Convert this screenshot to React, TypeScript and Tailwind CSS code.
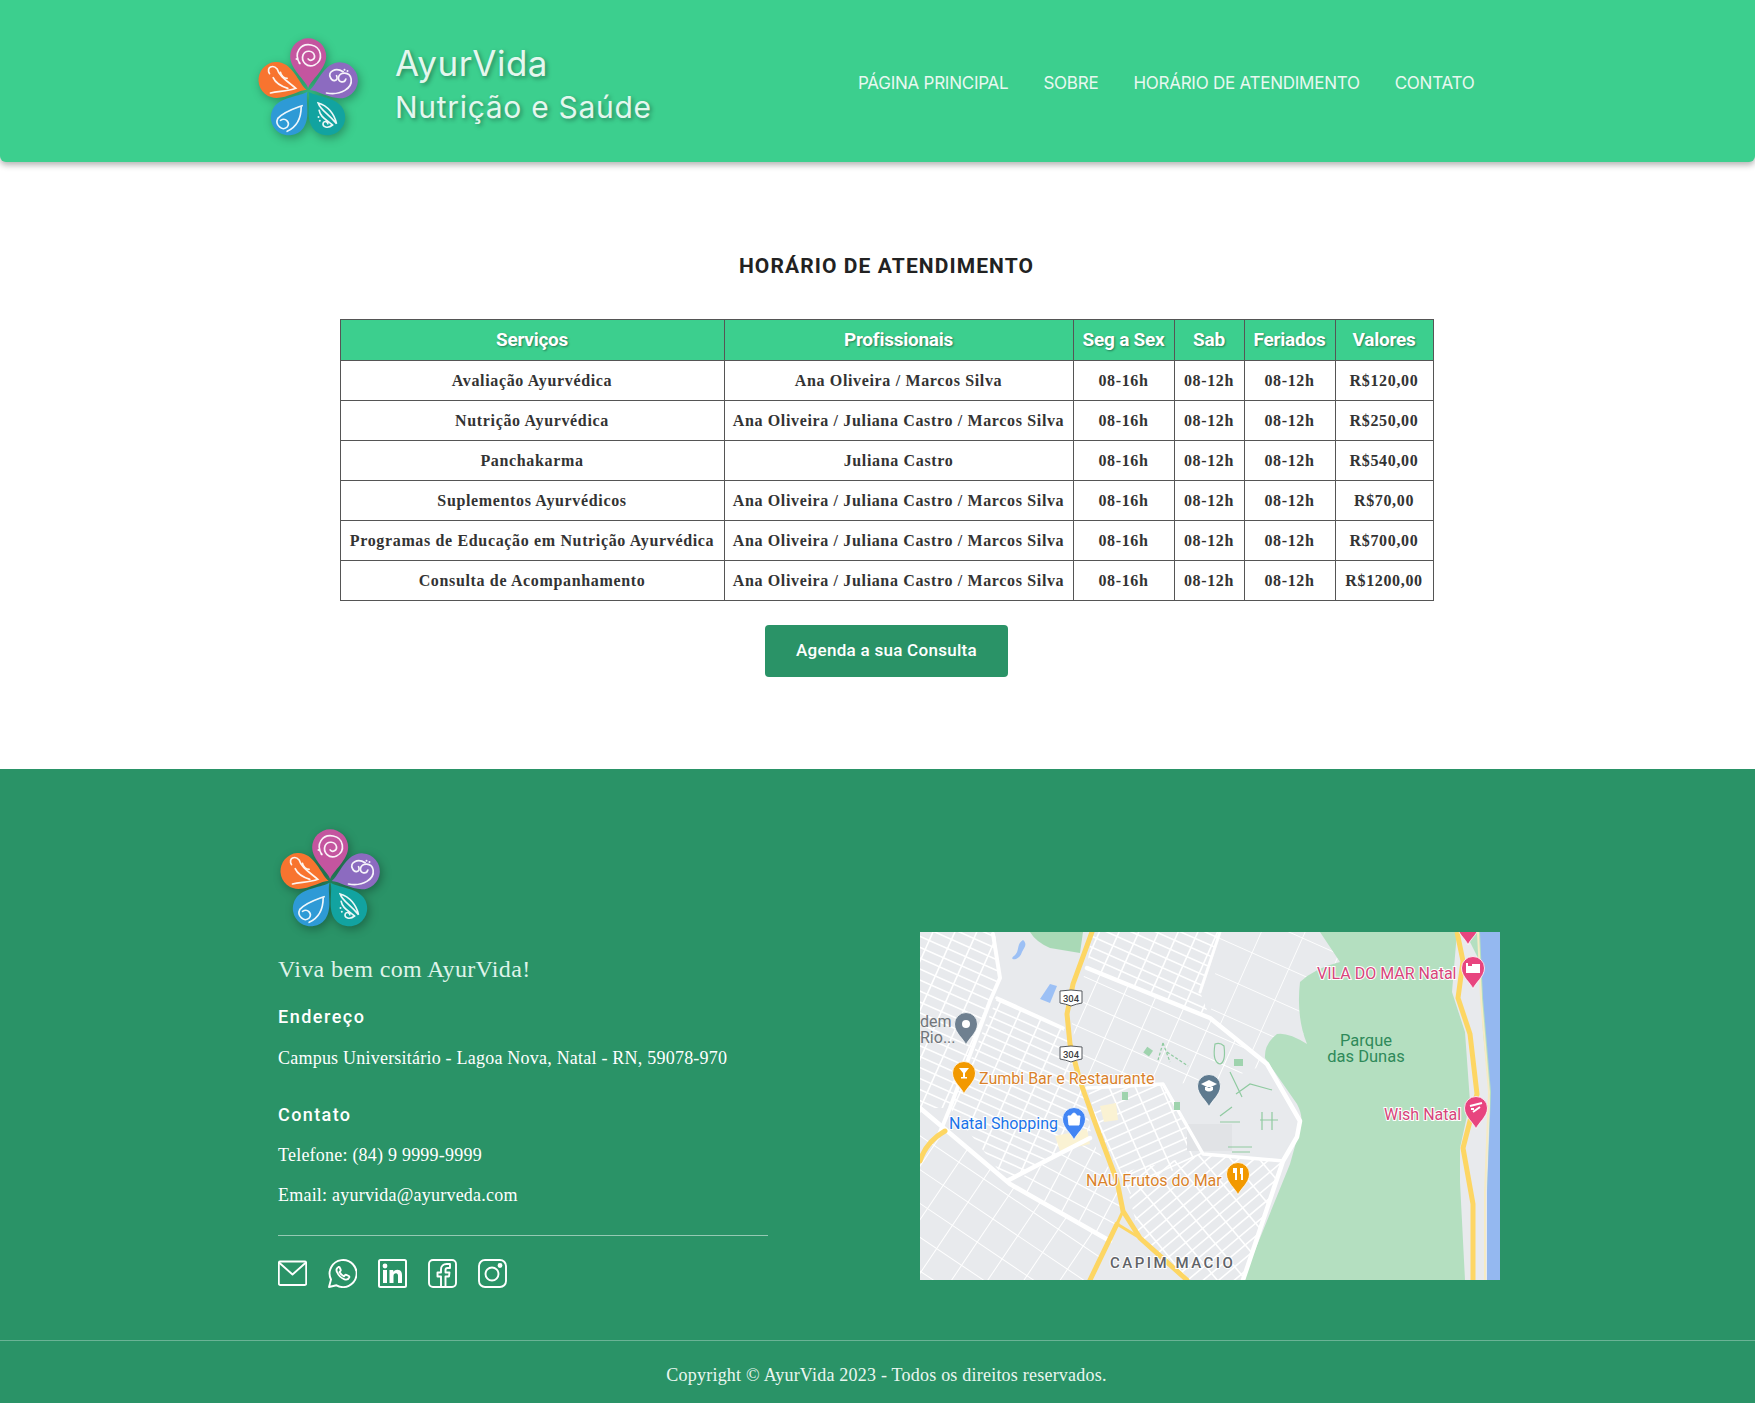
import type { ReactNode } from 'react'

const services = [
  ['Avaliação Ayurvédica', 'Ana Oliveira / Marcos Silva', 'R$120,00'],
  ['Nutrição Ayurvédica', 'Ana Oliveira / Juliana Castro / Marcos Silva', 'R$250,00'],
  ['Panchakarma', 'Juliana Castro', 'R$540,00'],
  ['Suplementos Ayurvédicos', 'Ana Oliveira / Juliana Castro / Marcos Silva', 'R$70,00'],
  ['Programas de Educação em Nutrição Ayurvédica', 'Ana Oliveira / Juliana Castro / Marcos Silva', 'R$700,00'],
  ['Consulta de Acompanhamento', 'Ana Oliveira / Juliana Castro / Marcos Silva', 'R$1200,00'],
]

const navLinks = ['PÁGINA PRINCIPAL', 'SOBRE', 'HORÁRIO DE ATENDIMENTO', 'CONTATO']

const DROP = 'M0 95 C-8 72 -54 38 -54 0 A54 54 0 1 1 54 0 C54 38 8 72 0 95Z'

function Logo() {
  return (
    <svg viewBox="60 52 308 300" className="block h-[100px] w-[103px] shrink-0 [filter:drop-shadow(2px_3px_5px_rgba(0,0,0,0.3))]">
      <path d={DROP} fill="#c4559f" transform="translate(213 110)" />
      <path d={DROP} fill="#8c6bc0" transform="translate(308 182) rotate(72)" />
      <path d={DROP} fill="#12a3a0" transform="translate(270 293) rotate(144)" />
      <path d={DROP} fill="#2e9ad6" transform="translate(155 293) rotate(216)" />
      <path d={DROP} fill="#f8742f" transform="translate(118 181) rotate(288)" />
      <g fill="none" stroke="#fff" strokeWidth="5" strokeLinecap="round" opacity="0.92">
        <path d="M188 132C168 100 190 70 222 76C254 82 260 122 232 136C210 146 190 125 198 105C205 90 228 92 232 108C234 120 220 126 213 118" />
        <path d="M268 220C312 228 346 205 342 178C338 154 306 156 304 174C303 188 322 192 326 178" />
        <path d="M318 156C295 142 270 156 280 174C286 188 306 184 298 168" />
        <path d="M97 162C86 142 108 134 120 148C126 170 150 184 176 206C150 216 124 214 100 220" />
        <path d="M108 174C116 192 132 200 152 206" />
        <path d="M130 158C132 170 142 176 150 176" />
        <path d="M195 258C168 268 142 275 122 296C112 316 136 336 150 322C160 310 146 292 130 302" />
        <path d="M192 262C192 290 182 320 150 335" />
        <path d="M243 250C250 272 272 280 298 312C292 284 272 258 243 250Z" />
        <path d="M246 272C250 292 265 298 286 316C272 328 255 322 258 310C262 302 272 306 272 312" />
      </g>
      <g fill="#fff" opacity="0.9">
        <circle cx="178" cy="118" r="3" />
        <circle cx="187" cy="130" r="3" />
        <circle cx="322" cy="150" r="3" />
        <circle cx="331" cy="154" r="3" />
        <circle cx="244" cy="292" r="3" />
        <circle cx="248" cy="303" r="3" />
      </g>
    </svg>
  )
}

function Pin({ x, y, color, children }: { x: number; y: number; color: string; children?: ReactNode }) {
  return (
    <g transform={`translate(${x} ${y})`}>
      <path d="M0 21C-2 15 -11.5 9 -11.5 0A11.5 11.5 0 1 1 11.5 0C11.5 9 2 15 0 21Z" fill={color} stroke="#fff" strokeWidth="0.8" />
      {children}
    </g>
  )
}

function Shield({ x, y }: { x: number; y: number }) {
  return (
    <g transform={`translate(${x} ${y})`}>
      <path d="M-11 -7Q0 -9 11 -7L11 5Q5 6 0 8Q-5 6 -11 5Z" fill="#fff" stroke="#55595e" strokeWidth="1" />
      <text y="3.5" textAnchor="middle" fontSize="9.5" fontFamily="Roboto, sans-serif" fontWeight="500" fill="#3c4043">
        304
      </text>
    </g>
  )
}

// a street grid covering one district of the map, cut to the district's outline
function District({ id, outline, angle, step, cross, width = 1.6 }: { id: string; outline: string; angle: number; step: number; cross: number; width?: number }) {
  const lines = []
  for (let i = -700; i <= 700; i += step) lines.push(<path key={`r${i}`} d={`M-700 ${i}H700`} />)
  for (let i = -700; i <= 700; i += cross) lines.push(<path key={`c${i}`} d={`M${i} -700V700`} />)
  return (
    <g>
      <clipPath id={id}>
        <path d={outline} />
      </clipPath>
      <g clipPath={`url(#${id})`}>
        <g transform={`translate(200 170) rotate(${angle})`} stroke="#fff" strokeWidth={width} fill="none">
          {lines}
        </g>
      </g>
    </g>
  )
}

function CityMap() {
  const label = 'font-[Roboto,sans-serif] text-[16px] [paint-order:stroke] [stroke:#ffffff] [stroke-width:2px]'
  const parkLabel = 'font-[Roboto,sans-serif] text-[16.5px] [paint-order:stroke] [stroke:#b4dfc0] [stroke-width:2px]'
  return (
    <svg viewBox="0 0 580 348" className="block h-[348px] w-[580px] shrink-0">
      <defs>
        <clipPath id="map-box">
          <rect width="580" height="348" />
        </clipPath>
      </defs>
      <g clipPath="url(#map-box)">
        <rect width="580" height="348" fill="#e8eaed" />
        <District id="d1" outline="M0 0H75L80 46L30 176H0Z" angle={24} step={10} cross={20} />
        <District id="d2" outline="M77 66L143 96L150 112L162 152L172 206L87 249L30 176Z" angle={24} step={9} cross={22} />
        <District id="d3" outline="M172 0H300L280 60L290 86L167 36Z" angle={24} step={10} cross={18} />
        <District id="d4" outline="M167 36L290 86L347 132L300 150L243 152L162 152L150 80Z" angle={24} step={24} cross={30} width={1} />
        <District id="d5" outline="M167 156L243 152L283 222L210 262L180 200Z" angle={-24} step={10} cross={24} />
        <District id="d6" outline="M90 252L170 206L197 249L203 285L190 309Z" angle={28} step={18} cross={20} width={1.2} />
        <District id="d7" outline="M0 176L90 252L190 309L170 348H0Z" angle={34} step={28} cross={30} width={1} />
        <District id="d8" outline="M203 240L283 222L363 229L323 348H267L220 306Z" angle={-40} step={10} cross={22} />
        <District id="d9" outline="M300 0H400L420 29L380 49L387 100L340 125L290 86Z" angle={24} step={34} cross={40} width={0.8} />
        <path d="M267 192H312V219H267Z" fill="#e1e3e6" />
        <path d="M110 0H163L160 21L130 16Q116 10 110 0Z" fill="#a9d9b6" />
        <path d="M400 0L420 30Q395 36 380 50Q376 85 387 112Q368 100 357 102Q344 112 345 126L377 172Q384 185 380 196L370 232L323 348H580V0Z" fill="#b4dfc0" />
        <path d="M120 67L130 52L137 54L130 71Z" fill="#9cc0f5" />
        <path d="M103 8C96 12 100 20 94 24C88 28 99 30 102 20C104 16 108 12 103 8Z" fill="#9cc0f5" />
        <path d="M180 174L196 171L198 188L184 190Z" fill="#faf2d3" />
        <path d="M135 204L167 197L170 212L140 219Z" fill="#faf2d3" />
        <g fill="none" stroke="#fff" strokeLinecap="round" strokeLinejoin="round">
          <path strokeWidth="4" d="M73 2L80 46L70 69L30 176L18 205" />
          <path strokeWidth="4.5" d="M0 176L90 252L190 309" />
          <path strokeWidth="3.5" d="M77 66L143 96" />
          <path strokeWidth="4.5" d="M167 36L290 86L347 132L380 189L377 205L363 229L323 348" />
          <path strokeWidth="4.5" d="M87 249L170 206" />
          <path strokeWidth="3.5" d="M167 156L243 152L283 222L363 229" />
          <path strokeWidth="3" d="M300 0L280 60" />
        </g>
        <g fill="none" stroke="#fdd663" strokeLinecap="round" strokeLinejoin="round" strokeWidth="5">
          <path d="M172 0L153 52L147 82L150 112L160 149L177 196L197 249L203 279L220 306L267 348" />
          <path d="M197 292L170 348" />
          <path d="M203 279L197 292L220 306" strokeWidth="3" />
          <path d="M0 229Q6 210 25 199" />
        </g>
        <path d="M545 0L560 30L563 100L570 170L567 260L567 348H545L540 250L540 216L550 170L545 100L532 60L537 0Z" fill="#e8eaed" />
        <path d="M560 0L563 66L571 160L567 260L567 348H580V0Z" fill="#94b8f0" />
        <path d="M558 0L561 66L569 160L565 260L565 348" fill="none" stroke="#f6ebc4" strokeWidth="2" />
        <path d="M537 0L543 29L538 66L550 102L557 162L543 216L553 272L553 348" fill="none" stroke="#fdd663" strokeWidth="5" />
        <g fill="#9fd3ae">
          <rect x="225" y="116" width="7" height="7" transform="rotate(35 228 119)" />
          <rect x="202" y="160" width="6" height="8" />
          <rect x="254" y="170" width="6" height="8" />
          <rect x="314" y="127" width="9" height="7" />
        </g>
        <g fill="none" stroke="#8fcaa0" strokeWidth="1.2">
          <path d="M243 111L238 128M243 111L250 130M247 120L268 134" strokeDasharray="3 2" />
          <path d="M295 112Q292 130 300 132Q306 130 304 114Q300 110 295 112Z" />
          <path d="M310 140L322 165M316 162L330 152L352 158M300 184L312 175M320 190H300" />
          <path d="M342 180V198M352 180V198M340 188H358M308 215H332M312 220H330" />
        </g>
        <text x="0" y="95" className="font-[Roboto,sans-serif] text-[16px]" fill="#70757a">dem</text>
        <text x="0" y="111" className="font-[Roboto,sans-serif] text-[16px]" fill="#70757a">Rio...</text>
        <Pin x={46} y={92} color="#6f8090"><circle r="4" fill="#fff" /></Pin>
        <Pin x={44} y={141} color="#f29900">
          <path d="M-5 -5H5L1 0V4H3V5.5H-3V4H-1V0Z" fill="#fff" />
        </Pin>
        <text x="59" y="152" className={label} fill="#d9822b">Zumbi Bar e Restaurante</text>
        <text x="29" y="197" className={label} fill="#1a73e8">Natal Shopping</text>
        <Pin x={154} y={187} color="#4285f4">
          <path d="M-6 -3H6L5 6H-5ZM-3 -3Q0 -9 3 -3" fill="#fff" stroke="#fff" strokeWidth="1" />
        </Pin>
        <Shield x={151} y={66} />
        <Shield x={151} y={122} />
        <Pin x={289} y={154} color="#5e7a8f">
          <path d="M-8 -2L0 -6L8 -2L0 2ZM-4 1V4Q0 7 4 4V1" fill="#fff" />
        </Pin>
        <text x="166" y="254" className={label} fill="#d9822b">NAU Frutos do Mar</text>
        <Pin x={318} y={242} color="#f29900">
          <path d="M-5 -6V-1H-3V6H-1V-6ZM2 -6H5V6H3V0H2Z" fill="#fff" />
        </Pin>
        <text x="446" y="114" textAnchor="middle" className={parkLabel} fill="#2f8a5a">Parque</text>
        <text x="446" y="130" textAnchor="middle" className={parkLabel} fill="#2f8a5a">das Dunas</text>
        <text x="397" y="47" className={label} fill="#d6457a">VILA DO MAR Natal</text>
        <Pin x={553} y={36} color="#e8457f">
          <path d="M-7 -5H-5V-2H-1V-4H7V5H-7Z" fill="#fff" />
        </Pin>
        <Pin x={548} y={-8} color="#e8457f" />
        <text x="464" y="188" className={label} fill="#d6457a">Wish Natal</text>
        <Pin x={556} y={176} color="#e8457f">
          <path d="M-6 -2L6 -5M-3 4L4 -1M-5 1H-2" stroke="#fff" strokeWidth="2" fill="none" />
        </Pin>
        <text x="190" y="336" className="font-[Roboto,sans-serif] text-[15px] font-medium tracking-[2.5px] [paint-order:stroke] [stroke:#ffffff] [stroke-width:2px]" fill="#5f6368">CAPIM MACIO</text>
      </g>
    </svg>
  )
}

function SocialIcons() {
  return (
    <div className="mt-[23px] flex gap-[21px] text-white">
      <svg width="29" height="29" viewBox="0 0 29 29" fill="none" stroke="currentColor" strokeWidth="1.9" strokeLinejoin="round">
        <rect x="0.8" y="2.5" width="27.4" height="23.5" rx="1.5" />
        <path d="M1 3.5L14.5 15.5L28 3.5" />
      </svg>
      <svg width="29" height="29" viewBox="0 0 29 29" fill="none" stroke="currentColor" strokeWidth="1.9" strokeLinejoin="round" strokeLinecap="round">
        <path d="M1 28L3 20.5A13.5 13.5 0 1 1 8.5 26.3Z" />
        <path d="M10.5 8C8.5 9 8 11 9 13C10.5 16.5 13 19 16.5 20.3C18.5 21 20.5 20 21.3 18.3C21.5 17.6 21.3 17.3 20.8 17L18.3 15.8C17.8 15.6 17.4 15.7 17 16.2L16 17.3C14 16.5 12.5 15 11.5 13L12.5 11.8C12.8 11.4 12.8 11 12.6 10.5L11.6 8.3C11.3 7.8 11 7.8 10.5 8Z" />
      </svg>
      <svg width="29" height="29" viewBox="0 0 29 29" fill="none">
        <rect x="1" y="1" width="27" height="27" rx="1.5" stroke="currentColor" strokeWidth="2" />
        <rect x="5" y="11" width="4" height="13" fill="currentColor" />
        <circle cx="7" cy="7" r="2.4" fill="currentColor" />
        <path d="M11.5 11H15.3V12.8C16.2 11.5 17.5 10.7 19.3 10.7C22.5 10.7 24 12.8 24 16V24H20V16.8C20 15.2 19.3 14.2 18 14.2C16.5 14.2 15.5 15.2 15.5 17V24H11.5Z" fill="currentColor" />
      </svg>
      <svg width="29" height="29" viewBox="0 0 29 29" fill="none" stroke="currentColor" strokeWidth="1.9" strokeLinejoin="round">
        <rect x="1" y="1" width="27" height="27" rx="4" />
        <path d="M13 28V17.5H9.5V13.5H13V10.5C13 7 15.5 5 18.5 5H22V9H19.5C18 9 17.5 9.8 17.5 11V13.5H21.5L21 17.5H17.5V28" />
      </svg>
      <svg width="29" height="29" viewBox="0 0 29 29" fill="none" stroke="currentColor" strokeWidth="1.9">
        <rect x="1" y="1" width="27" height="27" rx="6" />
        <circle cx="14" cy="15" r="6.5" />
        <circle cx="22" cy="6.5" r="1.5" fill="currentColor" />
      </svg>
    </div>
  )
}

export default function App() {
  const th = 'border border-[#555] font-bold'
  const td = 'border border-[#555] h-10 p-0'
  return (
    <div className="min-h-[1403px] bg-white font-['Liberation_Serif',serif] text-[#333]">
      <header className="relative flex h-[162px] items-center rounded-b-md bg-[#3ccf8e] pl-[257px] shadow-[0_3px_6px_rgba(0,0,0,0.3)]">
        <div className="pt-[12px]">
          <Logo />
        </div>
        <div className="ml-[35px] w-[463px] pt-[7px] font-[Inter,sans-serif] text-[#e4f7ee] [text-shadow:2px_2px_4px_rgba(0,0,0,0.35)]">
          <div className="text-[35px] leading-[44px] tracking-[0.5px]">AyurVida</div>
          <div className="text-[30px] leading-[44px] tracking-[0.7px]">Nutrição e Saúde</div>
        </div>
        <nav className="flex gap-[35px] pt-[6px] font-[Inter,sans-serif] text-[17px] tracking-[-0.25px] text-[#e8f8f0]">
          {navLinks.map((link) => (
            <span key={link}>{link}</span>
          ))}
        </nav>
      </header>

      <main className="flex h-[607px] flex-col items-center pt-[90px] pl-[18px]">
        <h1 className="font-[Roboto,sans-serif] text-[21px] leading-7 font-bold tracking-[1.1px] text-[#222]">HORÁRIO DE ATENDIMENTO</h1>
        <table className="mt-[39px] w-[1093px] table-fixed border-collapse text-center text-[16px] tracking-[0.65px]">
          <colgroup>
            <col className="w-[384px]" />
            <col className="w-[349px]" />
            <col className="w-[101px]" />
            <col className="w-[70px]" />
            <col className="w-[91px]" />
            <col className="w-[98px]" />
          </colgroup>
          <thead>
            <tr className="h-[41px] bg-[#3ccf8e] font-[Roboto,sans-serif] text-[19px] tracking-[-0.25px] text-white [text-shadow:1px_1px_2px_rgba(0,0,0,0.4)]">
              <th className={th}>Serviços</th>
              <th className={th}>Profissionais</th>
              <th className={th}>Seg a Sex</th>
              <th className={th}>Sab</th>
              <th className={th}>Feriados</th>
              <th className={th}>Valores</th>
            </tr>
          </thead>
          <tbody className="font-bold">
            {services.map(([name, pros, price]) => (
              <tr key={name}>
                <td className={td}>{name}</td>
                <td className={td}>{pros}</td>
                <td className={td}>08-16h</td>
                <td className={td}>08-12h</td>
                <td className={td}>08-12h</td>
                <td className={td}>{price}</td>
              </tr>
            ))}
          </tbody>
        </table>
        <button className="mt-[24px] h-[52px] w-[243px] rounded-[4px] bg-[#2a9367] font-[Roboto,sans-serif] text-[17px] font-medium tracking-[0.28px] text-white">Agenda a sua Consulta</button>
      </main>

      <footer className="bg-[#2a9367] text-white">
        <div className="flex h-[572px] border-b border-white/30 pl-[278px]">
          <div className="w-[490px] pt-[59px]">
            <div className="ml-[1px]">
              <Logo />
            </div>
            <p className="mt-[25px] text-[24px] leading-8 tracking-[0.35px] text-[#dff3ea]">Viva bem com AyurVida!</p>
            <h3 className="mt-[20px] font-[Roboto,sans-serif] text-[18px] leading-6 font-medium tracking-[1.5px]">Endereço</h3>
            <p className="mt-[17px] text-[18px] leading-6 tracking-[0.22px]">Campus Universitário - Lagoa Nova, Natal - RN, 59078-970</p>
            <h3 className="mt-[33px] font-[Roboto,sans-serif] text-[18px] leading-6 font-medium tracking-[1.4px]">Contato</h3>
            <p className="mt-4 text-[18px] leading-6 tracking-[0.22px]">Telefone: (84) 9 9999-9999</p>
            <p className="mt-4 text-[18px] leading-6 tracking-[0.22px]">Email: ayurvida@ayurveda.com</p>
            <div className="mt-[28px] border-t border-white/50" />
            <SocialIcons />
          </div>
          <div className="ml-[152px] pt-[163px]">
            <CityMap />
          </div>
        </div>
        <p className="h-[62px] pt-[22px] pl-[18px] text-center text-[18px] leading-6 tracking-[0.22px] text-[#eaf7f1]">Copyright © AyurVida 2023 - Todos os direitos reservados.</p>
      </footer>
    </div>
  )
}
